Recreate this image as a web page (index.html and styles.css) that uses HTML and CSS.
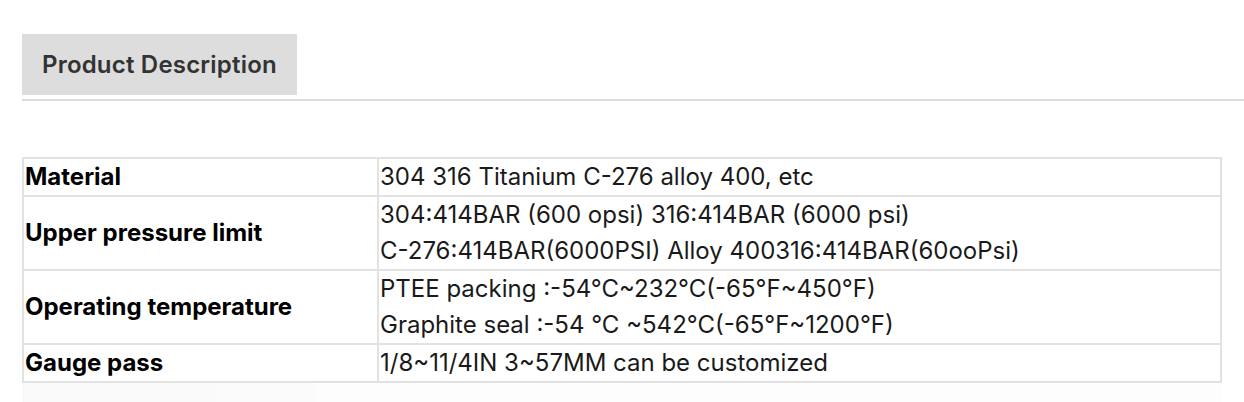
FILE: index.html
```html
<!DOCTYPE html>
<html>
<head>
<meta charset="utf-8">
<link rel="stylesheet" href="styles.css">
</head>
<body>
<div class="page">
  <div class="tabs">
    <div class="tab">Product Description</div>
  </div>
  <table class="spec">
    <tr>
      <th>Material</th>
      <td>304 316 Titanium C-276 alloy 400, etc</td>
    </tr>
    <tr>
      <th>Upper pressure limit</th>
      <td>304:414BAR (600 opsi) 316:414BAR (6000 psi)<br>C-276:414BAR(6000PSI) Alloy 400316:414BAR(60ooPsi)</td>
    </tr>
    <tr>
      <th>Operating temperature</th>
      <td>PTEE packing :-54°C~232°C(-65°F~450°F)<br>Graphite seal :-54 °C ~542°C(-65°F~1200°F)</td>
    </tr>
    <tr>
      <th>Gauge pass</th>
      <td>1/8~11/4IN 3~57MM can be customized</td>
    </tr>
  </table>
  <div class="below">
    <div class="ph ph1"></div>
    <div class="ph ph2"></div>
    <div class="ph ph3"></div>
  </div>
</div>
</body>
</html>
```
FILE: styles.css
```css
html, body {
  margin: 0;
  padding: 0;
  background: #fff;
}
.page {
  padding: 34px 0 0 22px;
  font-family: Inter, "Noto Sans", sans-serif;
}
.tabs {
  display: flex;
  border-bottom: 2px solid #dddddd;
  padding-bottom: 4px;
}
.tab {
  background: #dddddd;
  color: #333333;
  font-size: 24px;
  font-weight: 600;
  letter-spacing: 0.2px;
  height: 61px;
  line-height: 61px;
  padding: 0 20px;
  box-sizing: border-box;
  width: 275px;
  white-space: nowrap;
}
.spec {
  margin-top: 56px;
  border-collapse: collapse;
  width: 1200px;
  font-size: 24px;
  line-height: 36px;
}
.spec th, .spec td {
  border: 2px solid #e2e2e2;
  padding: 0 2px;
  vertical-align: middle;
  text-align: left;
  white-space: nowrap;
}
.spec th {
  width: 350px;
  font-weight: 700;
  color: #000;
  padding-left: 1px;
}
.spec td {
  font-weight: 400;
  color: #1a1a1a;
  padding-left: 1px;
}
.below {
  display: flex;
  width: 1200px;
  height: 20px;
}
.ph1 { width: 193px; background: #f9f9f9; }
.ph2 { width: 100px; background: #fbfbfb; }
.ph3 { flex: 1; background: #fdfdfd; }
```
